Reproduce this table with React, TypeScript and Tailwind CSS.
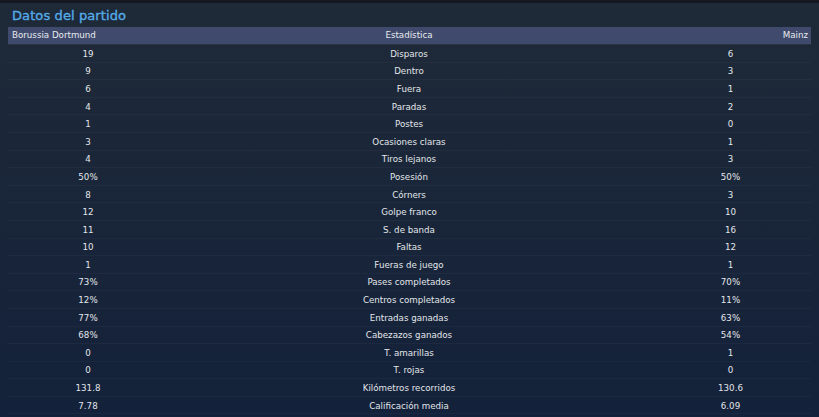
const stats: [string, string, string][] = [
  ["19", "Disparos", "6"],
  ["9", "Dentro", "3"],
  ["6", "Fuera", "1"],
  ["4", "Paradas", "2"],
  ["1", "Postes", "0"],
  ["3", "Ocasiones claras", "1"],
  ["4", "Tiros lejanos", "3"],
  ["50%", "Posesión", "50%"],
  ["8", "Córners", "3"],
  ["12", "Golpe franco", "10"],
  ["11", "S. de banda", "16"],
  ["10", "Faltas", "12"],
  ["1", "Fueras de juego", "1"],
  ["73%", "Pases completados", "70%"],
  ["12%", "Centros completados", "11%"],
  ["77%", "Entradas ganadas", "63%"],
  ["68%", "Cabezazos ganados", "54%"],
  ["0", "T. amarillas", "1"],
  ["0", "T. rojas", "0"],
  ["131.8", "Kilómetros recorridos", "130.6"],
  ["7.78", "Calificación media", "6.09"],
];

export default function App() {
  return (
    <div
      className="w-[819px] h-[417px] overflow-hidden bg-gradient-to-b from-[#1f2a38] to-[#13213a] text-[#e3e6ea] border-t-[3px] border-[#14191f]"
      style={{ fontFamily: '"DejaVu Sans", Verdana, sans-serif' }}
    >
      {/* Title */}
      <div className="h-[24px] px-[12px] flex items-center">
        <h1 className="text-[13px] font-normal text-[#55abe8] tracking-[0.1px] leading-none [-webkit-text-stroke:0.35px_#55abe8]">
          Datos del partido
        </h1>
      </div>

      <div className="mx-[8px] w-[803px]">
        {/* Header bar */}
        <div className="h-[18px] grid grid-cols-[160px_1fr_161px] items-center bg-[#3f4a6d] border-b border-[#2a3346] text-[8.7px] text-[#e8eaee]">
          <span className="pl-[4px]">Borussia Dortmund</span>
          <span className="text-center">Estadística</span>
          <span className="text-right pr-[3px]">Mainz</span>
        </div>

        {/* Rows */}
        {stats.map(([home, label, away], idx) => (
          <div
            key={idx}
            className="h-[17.6px] grid grid-cols-[160px_1fr_161px] items-center border-b border-[#ffffff08] text-[8.7px] pt-[2px]"
          >
            <span className="text-center">{home}</span>
            <span className="text-center">{label}</span>
            <span className="text-center">{away}</span>
          </div>
        ))}
      </div>
    </div>
  );
}
